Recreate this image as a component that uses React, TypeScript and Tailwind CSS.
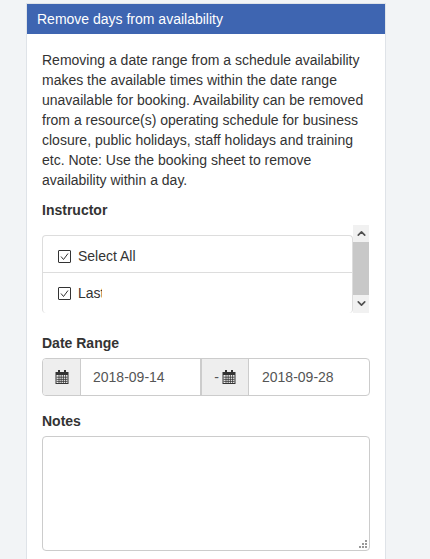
import { ChevronDown, ChevronUp } from "lucide-react";

function CalendarIcon() {
  return (
    <svg width="14" height="14" viewBox="0 0 14 14" aria-hidden className="text-[#333]">
      <path
        fill="currentColor"
        fillRule="evenodd"
        d="M3 0h2v2h4V0h2v2h2.5v12H.5V2H3V0zM1.5 5v8h11V5h-11z"
      />
      <path
        stroke="currentColor"
        strokeWidth="0.8"
        fill="none"
        d="M1.5 7.2h11M1.5 9.4h11M1.5 11.4h11M4 5v8M6.2 5v8M8.4 5v8M10.6 5v8"
      />
    </svg>
  );
}

function CheckRow({ label, clip, height }: { label: string; clip?: boolean; height: string }) {
  return (
    <div className={`flex items-center pl-[15px] ${height}`}>
      <span className="flex size-[13px] items-center justify-center rounded-[1px] border border-[#333] bg-white">
        <svg width="11" height="11" viewBox="0 0 11 11" aria-hidden>
          <path d="M2 5.5l2.5 3L9 2.5" fill="none" stroke="#333" strokeWidth="1" />
        </svg>
      </span>
      <span className={clip ? "ml-[7px] w-[24px] overflow-hidden" : "ml-[7px]"}>{label}</span>
    </div>
  );
}

export default function App() {
  return (
    <div className="h-[559px] overflow-hidden bg-[#f2f4f6] pl-[26px] pt-[3px] font-['Liberation_Sans',Arial,sans-serif] text-sm leading-5 text-[#333]">
      <div className="h-[600px] w-[360px] border border-[#dfe3e8] bg-white">
        <div className="flex h-[30px] items-center bg-[#3e65b1] px-[10px] text-white">
          Remove days from availability
        </div>
        <div className="px-[15px] pt-[16px]">
          <p>
            Removing a date range from a schedule availability makes the available times within the
            date range unavailable for booking. Availability can be removed from a resource(s)
            operating schedule for business closure, public holidays, staff holidays and training
            etc. Note: Use the booking sheet to remove availability within a day.
          </p>

          <label className="mt-[10px] block font-bold">Instructor</label>
          <div className="mt-[5px] flex">
            <div className="mt-[10px] h-[78px] w-[311px] overflow-hidden rounded-[4px] border border-b-0 border-[#ddd]">
              <CheckRow label="Select All" height="h-[36px] pt-[4px]" />
              <div className="border-t border-[#ddd]">
                <CheckRow label="Last" clip height="h-[40px]" />
              </div>
            </div>
            <div className="flex h-[88px] w-[16px] flex-col items-center bg-[#f1f1f1] text-[#505050]">
              <ChevronUp size={13} strokeWidth={3} className="h-[17px]" />
              <div className="h-[53px] w-full bg-[#c8c8c8]" />
              <ChevronDown size={13} strokeWidth={3} className="h-[17px]" />
            </div>
          </div>

          <label className="mt-[20px] block font-bold">Date Range</label>
          <div className="mt-[5px] flex h-[38px] w-[328px] overflow-hidden rounded-[4px] border border-[#ccc]">
            <div className="flex w-[38px] items-center justify-center border-r border-[#ccc] bg-[#eee]">
              <CalendarIcon />
            </div>
            <div className="flex w-[121px] items-center border-r-2 border-[#ccc] px-[12px] text-[#555]">
              2018-09-14
            </div>
            <div className="flex w-[47px] items-center justify-center gap-[3px] border-r border-[#ccc] bg-[#eee] text-[#555]">
              - <CalendarIcon />
            </div>
            <div className="flex flex-1 items-center px-[13px] text-[#555]">2018-09-28</div>
          </div>

          <label className="mt-[15px] block font-bold">Notes</label>
          <div className="relative mt-[5px] h-[115px] w-[328px] rounded-[4px] border border-[#ccc] bg-white">
            <svg
              width="9"
              height="9"
              viewBox="0 0 9 9"
              aria-hidden
              className="absolute bottom-[1px] right-[1px] text-[#999]"
            >
              <path
                fill="currentColor"
                d="M6 0h2v2H6zM3 3h2v2H3zM6 3h2v2H6zM0 6h2v2H0zM3 6h2v2H3zM6 6h2v2H6z"
              />
            </svg>
          </div>
        </div>
      </div>
    </div>
  );
}
